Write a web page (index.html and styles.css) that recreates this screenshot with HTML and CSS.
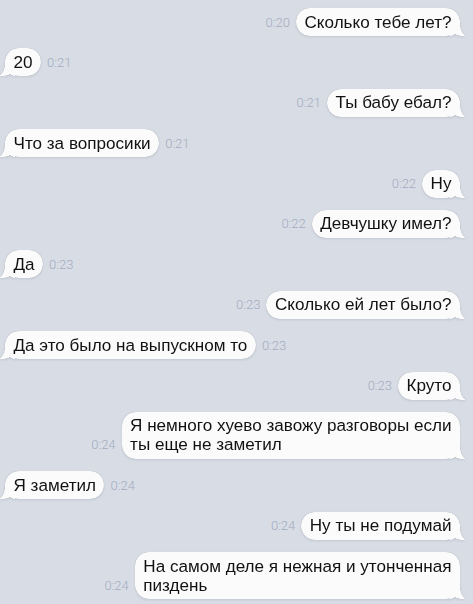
FILE: index.html
```html
<!DOCTYPE html>
<html lang="ru">
<head>
<meta charset="utf-8">
<link rel="stylesheet" href="styles.css">
</head>
<body>
<div class="chat">
  <div class="row out"><span class="time">0:20</span><div class="bubble">Сколько тебе лет?<svg class="tail" viewBox="0 0 16 16"><path d="M0 0H10C10 8 11.5 13 16 16C11 16.5 7 15.5 5 14C3.5 15.5 1.5 16 0 16Z"/></svg></div></div>
  <div class="row in"><div class="bubble">20<svg class="tail" viewBox="0 0 16 16"><path d="M0 0H10C10 8 11.5 13 16 16C11 16.5 7 15.5 5 14C3.5 15.5 1.5 16 0 16Z"/></svg></div><span class="time">0:21</span></div>
  <div class="row out"><span class="time">0:21</span><div class="bubble">Ты бабу ебал?<svg class="tail" viewBox="0 0 16 16"><path d="M0 0H10C10 8 11.5 13 16 16C11 16.5 7 15.5 5 14C3.5 15.5 1.5 16 0 16Z"/></svg></div></div>
  <div class="row in"><div class="bubble">Что за вопросики<svg class="tail" viewBox="0 0 16 16"><path d="M0 0H10C10 8 11.5 13 16 16C11 16.5 7 15.5 5 14C3.5 15.5 1.5 16 0 16Z"/></svg></div><span class="time">0:21</span></div>
  <div class="row out"><span class="time">0:22</span><div class="bubble">Ну<svg class="tail" viewBox="0 0 16 16"><path d="M0 0H10C10 8 11.5 13 16 16C11 16.5 7 15.5 5 14C3.5 15.5 1.5 16 0 16Z"/></svg></div></div>
  <div class="row out"><span class="time">0:22</span><div class="bubble">Девчушку имел?<svg class="tail" viewBox="0 0 16 16"><path d="M0 0H10C10 8 11.5 13 16 16C11 16.5 7 15.5 5 14C3.5 15.5 1.5 16 0 16Z"/></svg></div></div>
  <div class="row in"><div class="bubble">Да<svg class="tail" viewBox="0 0 16 16"><path d="M0 0H10C10 8 11.5 13 16 16C11 16.5 7 15.5 5 14C3.5 15.5 1.5 16 0 16Z"/></svg></div><span class="time">0:23</span></div>
  <div class="row out"><span class="time">0:23</span><div class="bubble">Сколько ей лет было?<svg class="tail" viewBox="0 0 16 16"><path d="M0 0H10C10 8 11.5 13 16 16C11 16.5 7 15.5 5 14C3.5 15.5 1.5 16 0 16Z"/></svg></div></div>
  <div class="row in"><div class="bubble">Да это было на выпускном то<svg class="tail" viewBox="0 0 16 16"><path d="M0 0H10C10 8 11.5 13 16 16C11 16.5 7 15.5 5 14C3.5 15.5 1.5 16 0 16Z"/></svg></div><span class="time">0:23</span></div>
  <div class="row out"><span class="time">0:23</span><div class="bubble">Круто<svg class="tail" viewBox="0 0 16 16"><path d="M0 0H10C10 8 11.5 13 16 16C11 16.5 7 15.5 5 14C3.5 15.5 1.5 16 0 16Z"/></svg></div></div>
  <div class="row out"><span class="time">0:24</span><div class="bubble">Я немного хуево завожу разговоры если<br>ты еще не заметил<svg class="tail" viewBox="0 0 16 16"><path d="M0 0H10C10 8 11.5 13 16 16C11 16.5 7 15.5 5 14C3.5 15.5 1.5 16 0 16Z"/></svg></div></div>
  <div class="row in"><div class="bubble">Я заметил<svg class="tail" viewBox="0 0 16 16"><path d="M0 0H10C10 8 11.5 13 16 16C11 16.5 7 15.5 5 14C3.5 15.5 1.5 16 0 16Z"/></svg></div><span class="time">0:24</span></div>
  <div class="row out"><span class="time">0:24</span><div class="bubble">Ну ты не подумай<svg class="tail" viewBox="0 0 16 16"><path d="M0 0H10C10 8 11.5 13 16 16C11 16.5 7 15.5 5 14C3.5 15.5 1.5 16 0 16Z"/></svg></div></div>
  <div class="row out"><span class="time">0:24</span><div class="bubble">На самом деле я нежная и утонченная<br>пиздень<svg class="tail" viewBox="0 0 16 16"><path d="M0 0H10C10 8 11.5 13 16 16C11 16.5 7 15.5 5 14C3.5 15.5 1.5 16 0 16Z"/></svg></div></div>
</div>
</body>
</html>
```

FILE: styles.css
```css
html, body {
  margin: 0;
  padding: 0;
  background: #d8dde5;
}
body {
  width: 473px;
  height: 604px;
  overflow: hidden;
  font-family: "Liberation Sans", Arial, sans-serif;
}
.chat {
  display: flex;
  flex-direction: column;
  gap: 12.4px;
  padding: 8px 13px 0 5px;
}
.row {
  display: flex;
  align-items: flex-end;
  gap: 6px;
}
.row.out {
  justify-content: flex-end;
}
.bubble {
  position: relative;
  z-index: 0;
  background: #fbfbfc;
  color: #111;
  font-size: 17.1px;
  line-height: 19px;
  padding: 4.5px 8.5px;
  border-radius: 14px;
  filter: drop-shadow(0 0 0.6px rgba(60, 70, 90, 0.6)) drop-shadow(0 1px 1px rgba(60, 70, 90, 0.14));
}
.tail {
  position: absolute;
  z-index: -1;
  bottom: 0;
  width: 16px;
  height: 16px;
  fill: #fbfbfc;
}
.out .tail {
  right: -6px;
}
.in .tail {
  left: -6px;
  transform: scaleX(-1);
}
.time {
  font-family: Roboto, "Liberation Sans", sans-serif;
  font-weight: 300;
  font-size: 13px;
  line-height: 15px;
  color: #a3acc1;
  margin-bottom: 6.5px;
}
```
